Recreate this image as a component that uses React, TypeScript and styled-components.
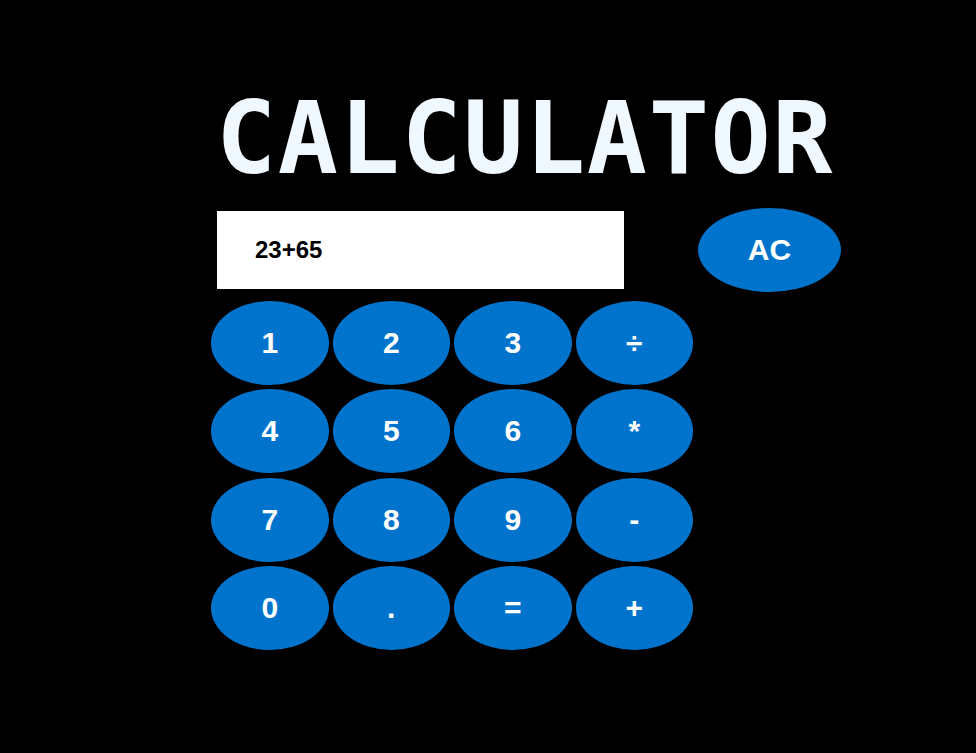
import React from "react";
import styled, { createGlobalStyle } from "styled-components";

const Global = createGlobalStyle`
  html, body {
    margin: 0;
    padding: 0;
    background: #000;
  }
  body {
    font-family: "Liberation Sans", Arial, sans-serif;
  }
`;

const Page = styled.div`
  min-height: 753px;
  background: #000;
  padding: 79px 0 0 211px;
  box-sizing: border-box;
`;

const Title = styled.h1`
  margin: 0 0 0 5px;
  font-family: "DejaVu Sans Mono", monospace;
  font-weight: 700;
  font-size: 100px;
  line-height: 120px;
  color: #f0f8ff;
  letter-spacing: 1.6px;
`;

const TopRow = styled.div`
  display: flex;
  align-items: center;
  margin-top: 9px;
`;

const Display = styled.div`
  margin-left: 6px;
  width: 407px;
  height: 78px;
  background: #fff;
  display: flex;
  align-items: center;
  padding-left: 38px;
  box-sizing: border-box;
  font-weight: 700;
  font-size: 24px;
  color: #000;
`;

const Key = styled.button<{ $wide?: boolean }>`
  border: none;
  border-radius: 50%;
  background: #0074cc;
  color: #fff;
  font-family: "Liberation Sans", Arial, sans-serif;
  font-weight: 700;
  font-size: 30px;
  display: flex;
  align-items: center;
  justify-content: center;
  padding: 0;
  cursor: pointer;
  width: ${(p) => (p.$wide ? "143px" : "117.5px")};
  height: 84px;
`;

const ClearKey = styled(Key)`
  margin-left: 74px;
`;

const Pad = styled.div`
  display: grid;
  grid-template-columns: repeat(4, 117.5px);
  grid-auto-rows: 84px;
  column-gap: 4px;
  row-gap: 4.33px;
  margin-top: 9px;
`;

const keys = ["1", "2", "3", "÷", "4", "5", "6", "*", "7", "8", "9", "-", "0", ".", "=", "+"];

export default function App() {
  return (
    <>
      <Global />
      <Page>
        <Title>CALCULATOR</Title>
        <TopRow>
          <Display>23+65</Display>
          <ClearKey $wide>AC</ClearKey>
        </TopRow>
        <Pad>
          {keys.map((k) => (
            <Key key={k}>{k}</Key>
          ))}
        </Pad>
      </Page>
    </>
  );
}
